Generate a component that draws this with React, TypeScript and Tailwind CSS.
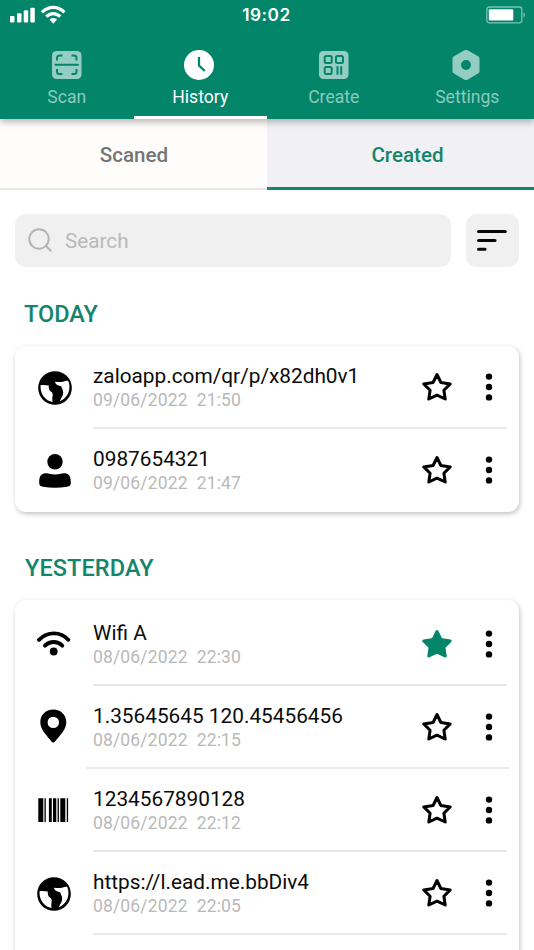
import { useState } from 'react';
import type { ReactNode } from 'react';

type IconName = 'globe' | 'user' | 'wifi' | 'pin' | 'barcode';

interface HistoryItem {
  icon: IconName;
  iconClass: string;
  title: string;
  date: string;
  time: string;
  starred?: boolean;
  wideDivider?: boolean;
}

const today: HistoryItem[] = [
  { icon: 'globe', iconClass: 'ml-px -mr-px mt-px', title: 'zaloapp.com/qr/p/x82dh0v1', date: '09/06/2022', time: '21:50' },
  { icon: 'user', iconClass: 'ml-px -mr-px', title: '0987654321', date: '09/06/2022', time: '21:47' },
];

const yesterday: HistoryItem[] = [
  { icon: 'wifi', iconClass: '-mt-0.5', title: 'Wifi A', date: '08/06/2022', time: '22:30', starred: true },
  { icon: 'pin', iconClass: '-ml-px mr-px -mt-[3px]', title: '1.35645645 120.45456456', date: '08/06/2022', time: '22:15', wideDivider: true },
  { icon: 'barcode', iconClass: '-ml-px mr-px -mt-[2px]', title: '1234567890128', date: '08/06/2022', time: '22:12' },
  { icon: 'globe', iconClass: '', title: 'https://l.ead.me.bbDiv4', date: '08/06/2022', time: '22:05' },
];

const ScanIcon = () => (
  <svg width="30" height="30" viewBox="0 0 30 30" fill="none">
    <rect x="0" y="1" width="29.5" height="28" rx="4.5" fill="#94cdc2" />
    <g stroke="#03856a" strokeWidth="2">
      <path d="M5 10.500V8A2.500 2.500 0 0 1 7.500 5.500H10.500M19.500 5.500H22A2.500 2.500 0 0 1 24.500 8V10.500M5 19V21.500A2.500 2.500 0 0 0 7.500 24H10.500M19.500 24H22A2.500 2.500 0 0 0 24.500 21.500V19" />
      <path d="M3.500 14.800H26" strokeLinecap="round" />
    </g>
  </svg>
);

const ClockIcon = () => (
  <svg className="relative -left-px" width="30" height="30" viewBox="0 0 30 30" fill="none">
    <circle cx="15" cy="15" r="15" fill="#fff" />
    <path d="M15 7V15.500L20.800 21" stroke="#03856a" strokeWidth="2.300" />
  </svg>
);

const CreateIcon = () => (
  <svg width="30" height="30" viewBox="0 0 30 30" fill="none">
    <rect x="0" y="1" width="29.5" height="28" rx="4.5" fill="#94cdc2" />
    <g stroke="#03856a" strokeWidth="2">
      <rect x="5.700" y="5.900" width="7" height="7" rx="1.500" />
      <rect x="17" y="5.900" width="7" height="7" rx="1.500" />
      <rect x="5.700" y="16.900" width="7" height="7" rx="1.500" />
      <path d="M18.500 16.200V24.800M22.200 16.200V24.800" />
    </g>
  </svg>
);

const SettingsIcon = () => (
  <svg className="relative -left-px" width="30" height="30" viewBox="0 0 30 30">
    <path d="M13 .5a4 4 0 0 1 4 0L27 6.200a3 3 0 0 1 1.500 2.600V21A3 3 0 0 1 27 23.600L17 29.400a4 4 0 0 1-4 0L3 23.600A3 3 0 0 1 1.500 21V8.800A3 3 0 0 1 3 6.200Z" fill="#94cdc2" />
    <circle cx="15" cy="15" r="4.900" fill="#03856a" />
  </svg>
);

const icons: Record<IconName, ReactNode> = {
  globe: (
    <svg width="34" height="34" viewBox="0 0 34 34">
      <circle cx="17" cy="17" r="16.800" />
      <path d="M2.500 14.300C5 13.900 8 14 10.800 14.600C10.800 17 10.800 18.800 12.300 20C14.300 21.400 15 22.500 14.700 24.500C14.200 26.500 14.200 28.500 14.600 31C7.500 29.800 2 23.500 2.500 14.300Z" fill="#fff" />
      <path d="M17 10.700C20 11.200 22.500 11.300 25 10.700C26.800 10.200 28.500 9.700 30.300 9.900C33.500 18 30 26.800 21.800 30.200C23 27 25.200 24.800 25.200 21.800C25.200 18.800 23.700 17.500 23.200 15.300C20.500 14.700 17.300 13.500 17 10.700Z" fill="#fff" />
    </svg>
  ),
  user: (
    <svg width="34" height="34" viewBox="0 0 34 34">
      <circle cx="17" cy="7.700" r="7.700" />
      <path d="M1.200 27.500C1.200 21.500 4 19.300 8 19.300C11.500 19.300 13 20.600 17 20.600S22.500 19.300 26 19.300C30 19.300 32.800 21.500 32.800 27.500V29C32.800 31.500 31.500 32.300 29 32.700C21 34 13 34 5 32.700C2.500 32.300 1.200 31.500 1.200 29Z" />
    </svg>
  ),
  wifi: (
    <svg width="34" height="34" viewBox="0 0 34 34" fill="none">
      <path d="M2 12.800C10.500 4.200 23.500 4.200 31.300 12.800" stroke="#000" strokeWidth="3.900" strokeLinecap="round" />
      <path d="M8 18.600C13 13.800 20.300 13.800 25.300 18.600" stroke="#000" strokeWidth="3.900" strokeLinecap="round" />
      <circle cx="16.700" cy="24.500" r="3.900" fill="#000" />
    </svg>
  ),
  pin: (
    <svg width="34" height="34" viewBox="0 0 34 34">
      <path fillRule="evenodd" d="M17.300 .5C9.800 .5 4.300 6 4.300 13C4.300 21 11.300 27 16 32.900Q17.300 34.300 18.600 32.900C23.300 27 30.300 21 30.300 13C30.300 6 24.800 .5 17.300 .5ZM17.300 7.700a5.700 5.700 0 1 1 0 11.400a5.700 5.700 0 1 1 0-11.400Z" />
    </svg>
  ),
  barcode: (
    <svg width="34" height="34" viewBox="0 0 34 34">
      <path d="M2.300 5.200h5v23.800h-5zM8.500 5.200h1.300v23.800h-1.300zM12.900 5.200h2.900v23.800h-2.900zM17 5.200h3.300v23.800h-3.300zM21.600 5.200h1.300v23.800h-1.300zM24.300 5.200h5v23.800h-5zM30.800 5.200h1.300v23.800h-1.300z" />
    </svg>
  ),
};

const Star = ({ filled }: { filled?: boolean }) => (
  <svg className="-mt-0.5" width="30" height="30" viewBox="0 0 30 30">
    <path
      d="M15 2.500L18.900 10.500L28.200 11.900L21.900 18.300L23.200 27L15 23.200L6.800 27L8.100 18.300L1.800 11.900L11.100 10.500Z"
      fill={filled ? '#03856a' : 'none'}
      stroke={filled ? '#03856a' : '#000'}
      strokeWidth="3"
      strokeLinejoin="round"
    />
  </svg>
);

const Dots = () => (
  <svg className="-mt-0.5" width="8" height="30" viewBox="0 0 8 30">
    <circle cx="4" cy="4.600" r="3.200" />
    <circle cx="4" cy="15" r="3.200" />
    <circle cx="4" cy="25.400" r="3.200" />
  </svg>
);

const StatusBar = () => (
  <div className="h-[30px] flex items-center justify-between pl-[10px] pr-[11px]">
    <div className="flex-1">
      <svg width="57" height="20" viewBox="0 0 57 20" fill="#fff">
        <rect x="0" y="11" width="4.500" height="6.500" rx="1" />
        <rect x="7" y="8.300" width="4.500" height="9.200" rx="1" />
        <rect x="13.700" y="5.200" width="4.500" height="12.300" rx="1" />
        <rect x="20.300" y="2.700" width="4.500" height="14.800" rx="1" />
        <g fill="none" stroke="#fff" strokeWidth="3.200">
          <path d="M32 7.300C38.500 .6 48 .6 54.500 7.300" />
          <path d="M36.300 11.700C40.300 7.600 46.200 7.600 50.200 11.700" />
        </g>
        <path d="M39.500 14.600C41.500 12.600 45 12.600 47 14.600L43.250 18.700Z" />
      </svg>
    </div>
    <p className="font-['Inter'] font-semibold text-[17.300px] leading-5 tracking-[0.500px] text-white">19:02</p>
    <div className="flex-1 flex justify-end">
      <svg className="-mr-[3px]" width="40" height="18" viewBox="0 0 40 18">
        <rect x=".8" y="1" width="35" height="15.800" rx="2.500" fill="none" stroke="#7fc2b4" strokeWidth="1.300" />
        <rect x="2.800" y="3.300" width="24.500" height="11.200" rx="1" fill="#fff" />
        <path d="M37.500 6.500C39.500 7 39.500 11 37.500 11.500Z" fill="#7fc2b4" />
      </svg>
    </div>
  </div>
);

const navItems = [
  { label: 'Scan', icon: <ScanIcon /> },
  { label: 'History', icon: <ClockIcon /> },
  { label: 'Create', icon: <CreateIcon /> },
  { label: 'Settings', icon: <SettingsIcon /> },
];

function Row({ item, last }: { item: HistoryItem; last: boolean }) {
  return (
    <div className="h-[83px] flex flex-col">
      <div className={`flex-1 flex items-center pl-[22px] pr-[26px] ${last ? '' : 'pt-[2px]'}`}>
        <div className={item.iconClass}>{icons[item.icon]}</div>
        <div className="ml-[22px] flex-1 whitespace-pre">
          <p className="text-[20.800px] leading-6 text-[#0b0b0b]">{item.title}</p>
          <p className="text-[17.500px] leading-6 tracking-[0.160px] text-[#b9b9b9]">{`${item.date}  ${item.time}`}</p>
        </div>
        <Star filled={item.starred} />
        <div className="ml-[33px]"><Dots /></div>
      </div>
      {!last && <div className={`h-[2px] bg-[#e9e9e9] ${item.wideDivider ? 'ml-[71px] mr-[10px]' : 'ml-[78px] mr-[12px]'}`} />}
    </div>
  );
}

interface SectionProps {
  title: string;
  items: HistoryItem[];
  className: string;
  titleClass: string;
  cardClass: string;
  more?: boolean;
}

function Section({ title, items, className, titleClass, cardClass, more }: SectionProps) {
  return (
    <section className={className}>
      <h2 className={`text-[23.500px] leading-7 font-medium text-[#14856b] ${titleClass}`}>{title}</h2>
      <div className={`mt-[18px] rounded-[11px] bg-white shadow-[1px_2px_5px_rgba(0,0,0,0.24)] ${cardClass}`}>
        {items.map((item, i) => (
          <Row key={item.title} item={item} last={!more && i === items.length - 1} />
        ))}
      </div>
    </section>
  );
}

export default function App() {
  const [activeNav, setActiveNav] = useState('History');
  const [search, setSearch] = useState('');

  return (
    <div className="w-[534px] h-[950px] overflow-hidden bg-white font-['Roboto',sans-serif]">
      {/* Header */}
      <header className="relative h-[119px] bg-[#03856a] shadow-[0_3px_7px_rgba(0,0,0,0.28)]">
        <StatusBar />
        <nav className="grid grid-cols-4 h-[89px]">
          {navItems.map(({ label, icon }) => (
            <button
              key={label}
              onClick={() => setActiveNav(label)}
              className={`flex flex-col items-center pt-[20px] border-b-[3px] text-[17.600px] leading-6 ${activeNav === label ? 'text-white border-white' : 'text-[#8bcabd] border-transparent'}`}
            >
              {icon}
              <span className="mt-[5px]">{label}</span>
            </button>
          ))}
        </nav>
      </header>

      {/* Scaned / Created tabs */}
      <div className="grid grid-cols-2 h-[71px] text-[20.600px] font-medium">
        <div className="flex items-center justify-center pt-[4px] pl-[1px] bg-[#fffdfc] border-b-2 border-[#e6e6e6] text-[#737577]">Scaned</div>
        <div className="flex items-center justify-center pt-[5px] pl-[14px] bg-[#f0f0f5] border-b-[3px] border-[#12876e] text-[#14856b]">Created</div>
      </div>

      <main className="px-[15px] pt-[24px]">
        <div className="flex gap-[15px]">
          <label className="flex-1 h-[53px] flex items-center pl-[13px] rounded-[11px] bg-[#f0f0f0]">
            <svg width="25" height="25" viewBox="0 0 25 25" fill="none" stroke="#b3b3b3" strokeWidth="2">
              <circle cx="11" cy="11" r="9.700" />
              <path d="M17.800 17.800L23.300 23.300" />
            </svg>
            <input
              value={search}
              onChange={(e) => setSearch(e.target.value)}
              placeholder="Search"
              className="ml-[12px] pt-[2px] w-[300px] outline-none text-[20.700px] placeholder:text-[#b9b9b9]"
            />
          </label>
          <button className="w-[53px] h-[53px] flex items-center justify-center pr-px pb-[2px] rounded-[11px] bg-[#f0f0f0]">
            <svg width="30" height="24" viewBox="0 0 30 24" stroke="#080808" strokeWidth="3" strokeLinecap="round">
              <path d="M1.500 3.500H28.300M1.500 12.400H18.100M1.500 21.200H8.100" />
            </svg>
          </button>
        </div>

        <Section title="TODAY" items={today} className="mt-[33px]" titleClass="pl-[9px]" cardClass="" />
        <Section
          title="YESTERDAY"
          items={yesterday}
          className="mt-[42px]"
          titleClass="pl-[10px] tracking-[0.080px]"
          cardClass="pt-[3px] pb-[83px]"
          more
        />
      </main>
    </div>
  );
}
